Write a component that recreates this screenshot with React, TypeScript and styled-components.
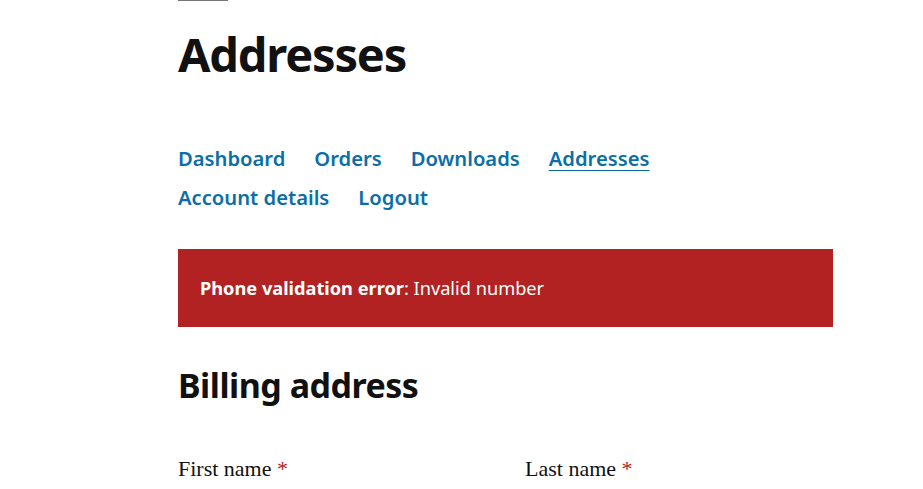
import styled, { createGlobalStyle } from 'styled-components';

const GlobalStyle = createGlobalStyle`
  html, body {
    margin: 0;
    padding: 0;
    background: #fff;
  }
  body {
    font-family: "Noto Sans", "Open Sans", sans-serif;
    color: #111;
  }
`;

const Page = styled.div`
  width: 655px;
  margin-left: 178px;
`;

const Rule = styled.hr`
  width: 50px;
  height: 1px;
  margin: 0;
  border: 0;
  background: #767676;
`;

const PageTitle = styled.h1`
  margin: 21px 0 0;
  font-size: 47px;
  line-height: 64px;
  font-weight: 700;
  letter-spacing: -1.2px;
`;

const Nav = styled.nav`
  display: flex;
  flex-wrap: wrap;
  column-gap: 29px;
  margin-top: 53px;
  max-width: 500px;
`;

const NavLink = styled.a<{ $active?: boolean }>`
  font-size: 20.2px;
  line-height: 39px;
  font-weight: 600;
  color: #0a6ea8;
  text-decoration: ${(p) => (p.$active ? 'underline' : 'none')};
  text-underline-offset: 4px;
  text-decoration-thickness: 1px;
`;

const ErrorBanner = styled.div`
  margin-top: 32px;
  height: 78px;
  padding: 0 22px;
  display: flex;
  align-items: center;
  background: #b22222;
  color: #fff;
  font-size: 18.2px;
`;

const SectionTitle = styled.h2`
  margin: 34px 0 0;
  font-size: 34px;
  line-height: 48px;
  font-weight: 700;
  letter-spacing: -0.5px;
`;

const FieldRow = styled.div`
  display: grid;
  grid-template-columns: 347px 1fr;
  margin-top: 47px;
`;

const Label = styled.label`
  font-family: "Liberation Serif", serif;
  font-size: 22px;
  color: #111;
`;

const Required = styled.span`
  color: #b22222;
`;

const links = ['Dashboard', 'Orders', 'Downloads', 'Addresses', 'Account details', 'Logout'];

export default function App() {
  return (
    <>
      <GlobalStyle />
      <Page>
        <Rule />
        <PageTitle>Addresses</PageTitle>
        <Nav>
          {links.map((l) => (
            <NavLink key={l} href="#" $active={l === 'Addresses'}>
              {l}
            </NavLink>
          ))}
        </Nav>
        <ErrorBanner>
          <span>
            <strong>Phone validation error</strong>: Invalid number
          </span>
        </ErrorBanner>
        <SectionTitle>Billing address</SectionTitle>
        <FieldRow>
          <Label>
            First name <Required>*</Required>
          </Label>
          <Label>
            Last name <Required>*</Required>
          </Label>
        </FieldRow>
      </Page>
    </>
  );
}
